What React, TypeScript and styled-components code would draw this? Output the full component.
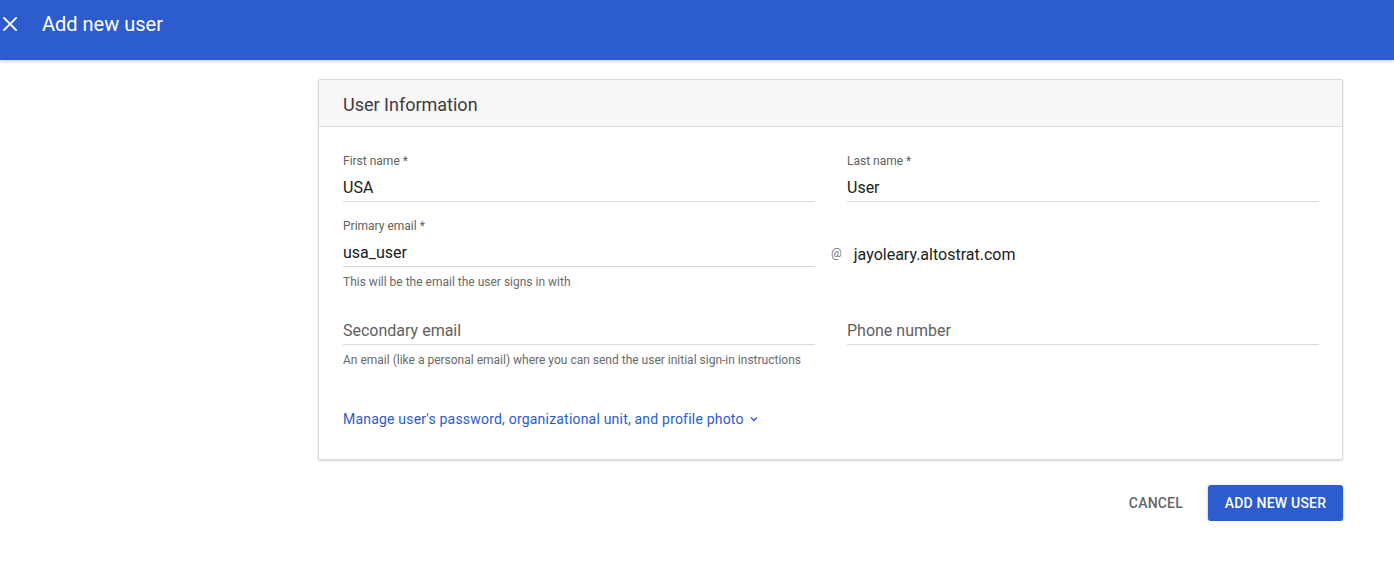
import React from "react";
import styled, { createGlobalStyle } from "styled-components";

const Global = createGlobalStyle`
  html, body { margin: 0; padding: 0; background: #fff; }
  body { font-family: Roboto, "Noto Sans", Arial, sans-serif; -webkit-font-smoothing: antialiased; }
  * { box-sizing: border-box; }
`;

const TopBar = styled.header`
  height: 60px;
  background: #2d5ccf;
  display: flex;
  align-items: center;
  padding-bottom: 12px;
  box-shadow: 0 1px 3px rgba(0,0,0,0.25);
  position: relative;
  z-index: 1;
`;

const CloseBtn = styled.button`
  width: 20px;
  height: 24px;
  margin-left: 0;
  padding: 0;
  border: 0;
  background: transparent;
  display: flex;
  align-items: center;
  justify-content: center;
  cursor: pointer;
`;

const Title = styled.h1`
  margin: 0 0 0 22px;
  font-size: 20px;
  font-weight: 400;
  color: #fff;
`;

const Page = styled.main`
  display: grid;
  grid-template-columns: 318px 1025px;
  padding-top: 19px;
`;

const Column = styled.div`
  grid-column: 2;
  display: flex;
  flex-direction: column;
`;

const Card = styled.section`
  border: 1px solid #dadada;
  border-radius: 2px;
  box-shadow: 0 1px 2px rgba(0,0,0,0.18);
  background: #fff;
`;

const CardHeader = styled.div`
  height: 47px;
  background: #f7f7f7;
  border-bottom: 1px solid #dcdcdc;
  display: flex;
  align-items: center;
  padding: 2px 24px 0;
  font-size: 18px;
  color: #3c3c3c;
`;

const CardBody = styled.div`
  padding: 26px 23px 30px 24px;
`;

const Grid = styled.div`
  display: grid;
  grid-template-columns: 472px 472px;
  column-gap: 32px;
`;

const Field = styled.div<{ $top?: number }>`
  display: flex;
  flex-direction: column;
  margin-top: ${p => p.$top ?? 0}px;
`;

const Label = styled.div`
  font-size: 12px;
  line-height: 16px;
  color: #5f5f5f;
`;

const Value = styled.div<{ $placeholder?: boolean; $gap?: number }>`
  margin-top: ${p => p.$gap ?? 7}px;
  font-size: 16px;
  line-height: 24px;
  padding-bottom: 1px;
  border-bottom: 1px solid #d9d9d9;
  color: ${p => (p.$placeholder ? "#5f5f5f" : "#202020")};
`;

const Helper = styled.div`
  margin-top: 7px;
  font-size: 12px;
  line-height: 16px;
  color: #6a6a6a;
`;

const EmailRow = styled.div`
  display: flex;
  align-items: flex-start;
  margin-top: 16px;
`;

const EmailField = styled(Field)`
  width: 472px;
`;

const Domain = styled.div`
  display: flex;
  align-items: center;
  margin-top: 22px;
  height: 24px;
  margin-left: 16px;
`;

const At = styled.span`
  font-size: 12px;
  color: #757575;
  margin-right: 12px;
  margin-top: 1px;
`;

const DomainText = styled.span`
  font-size: 16px;
  color: #222;
  margin-top: 4px;
`;

const Link = styled.a`
  display: inline-flex;
  align-items: center;
  margin-top: 41px;
  font-size: 14px;
  line-height: 20px;
  color: #2a5bd7;
  text-decoration: none;
  letter-spacing: 0.2px;
  cursor: pointer;
`;

const Actions = styled.div`
  display: flex;
  justify-content: flex-end;
  align-items: center;
  gap: 9px;
  margin-top: 25px;
`;

const TextButton = styled.button`
  height: 36px;
  padding: 0 16px;
  border: 0;
  background: transparent;
  font-family: inherit;
  font-size: 14px;
  font-weight: 500;
  color: #666;
  letter-spacing: 0.2px;
  cursor: pointer;
`;

const PrimaryButton = styled.button`
  height: 36px;
  width: 135px;
  border: 0;
  border-radius: 3px;
  background: #2d5ccf;
  color: #fff;
  font-family: inherit;
  font-size: 14px;
  font-weight: 500;
  letter-spacing: 0.2px;
  box-shadow: 0 1px 3px rgba(0,0,0,0.3);
  cursor: pointer;
`;

export default function App() {
  return (
    <>
      <Global />
      <TopBar>
        <CloseBtn aria-label="Close">
          <svg width="14" height="14" viewBox="0 0 14 14">
            <path d="M1 1 L13 13 M13 1 L1 13" stroke="#fff" strokeWidth="1.8" strokeLinecap="square" />
          </svg>
        </CloseBtn>
        <Title>Add new user</Title>
      </TopBar>
      <Page>
        <Column>
          <Card>
            <CardHeader>User Information</CardHeader>
            <CardBody>
              <Grid>
                <Field>
                  <Label>First name *</Label>
                  <Value>USA</Value>
                </Field>
                <Field>
                  <Label>Last name *</Label>
                  <Value>User</Value>
                </Field>
              </Grid>
              <EmailRow>
                <EmailField>
                  <Label>Primary email *</Label>
                  <Value>usa_user</Value>
                  <Helper>This will be the email the user signs in with</Helper>
                </EmailField>
                <Domain>
                  <At>@</At>
                  <DomainText>jayoleary.altostrat.com</DomainText>
                </Domain>
              </EmailRow>
              <Grid>
                <Field $top={29}>
                  <Value $placeholder $gap={0}>Secondary email</Value>
                  <Helper>An email (like a personal email) where you can send the user initial sign-in instructions</Helper>
                </Field>
                <Field $top={29}>
                  <Value $placeholder $gap={0}>Phone number</Value>
                </Field>
              </Grid>
              <Link>
                Manage user's password, organizational unit, and profile photo
                <svg width="12" height="12" viewBox="0 0 12 12" style={{ marginLeft: 4 }}>
                  <path d="M3 4.5 L6 7.5 L9 4.5" stroke="#2a5bd7" strokeWidth="1.4" fill="none" />
                </svg>
              </Link>
            </CardBody>
          </Card>
          <Actions>
            <TextButton>CANCEL</TextButton>
            <PrimaryButton>ADD NEW USER</PrimaryButton>
          </Actions>
        </Column>
      </Page>
    </>
  );
}
